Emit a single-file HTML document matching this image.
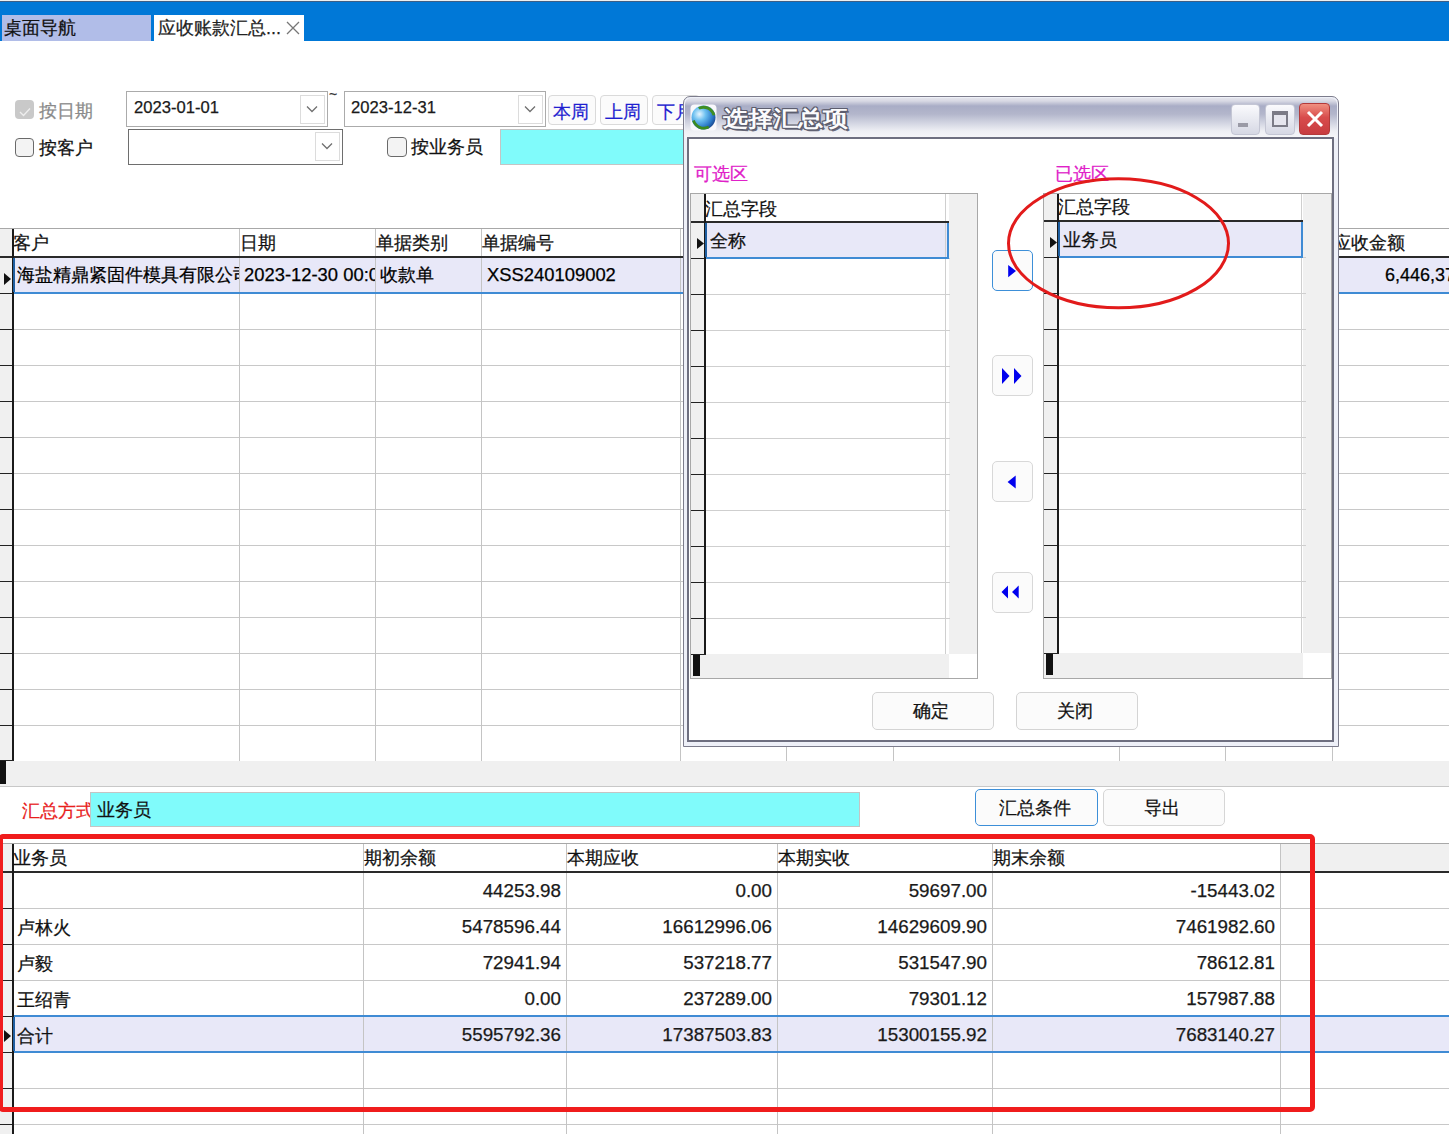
<!DOCTYPE html><html><head><meta charset="utf-8"><style>
html,body{margin:0;padding:0;}
body{width:1449px;height:1134px;overflow:hidden;position:relative;background:#fff;font-family:"Liberation Sans",sans-serif;color:#000;}
div{position:absolute;box-sizing:border-box;}
.t{white-space:nowrap;font-size:18px;line-height:20px;-webkit-text-stroke:0.25px;}
.cell{overflow:hidden;white-space:nowrap;font-size:18px;line-height:20px;-webkit-text-stroke:0.25px;}
</style></head><body>
<div style="left:0px;top:0px;width:1449px;height:1px;background:#eceef0"></div>
<div style="left:0px;top:1px;width:1449px;height:1px;background:#3d5f86"></div>
<div style="left:0px;top:2px;width:1449px;height:39px;background:#0078d7"></div>
<div style="left:2px;top:15px;width:149px;height:26px;background:#b1bde8"></div>
<div class="t" style="left:4px;top:18px;font-size:18px;line-height:20px;color:#111">桌面导航</div>
<div style="left:154px;top:15px;width:150px;height:27px;background:#fff"></div>
<div class="t" style="left:158px;top:18px;font-size:18px;line-height:20px;color:#222">应收账款汇总...</div>
<div style="left:286px;top:21px;width:14px;height:14px"><svg width="14" height="14" viewBox="0 0 14 14"><path d="M1 1 L13 13 M13 1 L1 13" stroke="#777" stroke-width="1.3"/></svg></div>
<div style="left:15px;top:100px;width:19px;height:19px;background:#c9c9c9;border-radius:4px"></div>
<div style="left:18px;top:104px;width:14px;height:12px"><svg width="14" height="12" viewBox="0 0 14 12"><path d="M2 6 L5.5 9.5 L12 2.5" fill="none" stroke="#eee" stroke-width="1.3"/></svg></div>
<div class="t" style="left:39px;top:101px;color:#8a8a8a">按日期</div>
<div style="left:126px;top:91px;width:202px;height:36px;border:1px solid #ababab;background:#fff"></div>
<div style="left:300px;top:95px;width:25px;height:29px;border:1px solid #dcdcdc;background:#fff"></div>
<div style="left:306px;top:105px;width:12px;height:8px"><svg width="12" height="8" viewBox="0 0 12 8" style="display:block"><path d="M1 1.5 L6 6.5 L11 1.5" fill="none" stroke="#707070" stroke-width="1.3"/></svg></div>
<div class="t" style="left:134px;top:98px;font-size:16.6px;line-height:20px;color:#1a1a1a">2023-01-01</div>
<div class="t" style="left:329px;top:86px;font-size:14px;line-height:16px;color:#333">~</div>
<div style="left:344px;top:91px;width:202px;height:36px;border:1px solid #ababab;background:#fff"></div>
<div style="left:518px;top:95px;width:25px;height:29px;border:1px solid #dcdcdc;background:#fff"></div>
<div style="left:524px;top:105px;width:12px;height:8px"><svg width="12" height="8" viewBox="0 0 12 8" style="display:block"><path d="M1 1.5 L6 6.5 L11 1.5" fill="none" stroke="#707070" stroke-width="1.3"/></svg></div>
<div class="t" style="left:351px;top:98px;font-size:16.6px;line-height:20px;color:#1a1a1a">2023-12-31</div>
<div style="left:548px;top:95px;width:48px;height:30px;border:1px solid #dadada;border-radius:4px;background:#fbfbfb"></div>
<div class="t" style="left:553px;top:102px;color:#1f1fd0">本周</div>
<div style="left:600px;top:95px;width:48px;height:30px;border:1px solid #dadada;border-radius:4px;background:#fbfbfb"></div>
<div class="t" style="left:605px;top:102px;color:#1f1fd0">上周</div>
<div style="left:652px;top:95px;width:48px;height:30px;border:1px solid #dadada;border-radius:4px;background:#fbfbfb"></div>
<div class="t" style="left:657px;top:102px;color:#1f1fd0">下月</div>
<div style="left:15px;top:138px;width:19px;height:19px;border:1px solid #6a6a6a;border-radius:4px;background:#f3f3f3"></div>
<div class="t" style="left:39px;top:138px;color:#111">按客户</div>
<div style="left:128px;top:129px;width:215px;height:36px;border:1px solid #6e6e6e;background:#fff"></div>
<div style="left:315px;top:132px;width:25px;height:29px;border:1px solid #dcdcdc;background:#fff"></div>
<div style="left:321px;top:142px;width:12px;height:8px"><svg width="12" height="8" viewBox="0 0 12 8" style="display:block"><path d="M1 1.5 L6 6.5 L11 1.5" fill="none" stroke="#707070" stroke-width="1.3"/></svg></div>
<div style="left:387px;top:137px;width:20px;height:20px;border:1px solid #6a6a6a;border-radius:4px;background:#f3f3f3"></div>
<div class="t" style="left:411px;top:137px;color:#111">按业务员</div>
<div style="left:500px;top:129px;width:200px;height:36px;border:1px solid #c4c4c4;background:#80fbfb"></div>
<div style="left:0px;top:228px;width:1449px;height:1px;background:#a8a8a8"></div>
<div style="left:0px;top:229px;width:12px;height:532px;background:#f0f0f0"></div>
<div style="left:13px;top:257px;width:1436px;height:36px;background:#e8e8f8"></div>
<div style="left:13px;top:293px;width:1449px;height:1px;background:#c8c8c8"></div>
<div style="left:0px;top:293px;width:13px;height:1px;background:#222"></div>
<div style="left:13px;top:329px;width:1449px;height:1px;background:#c8c8c8"></div>
<div style="left:0px;top:329px;width:13px;height:1px;background:#222"></div>
<div style="left:13px;top:365px;width:1449px;height:1px;background:#c8c8c8"></div>
<div style="left:0px;top:365px;width:13px;height:1px;background:#222"></div>
<div style="left:13px;top:401px;width:1449px;height:1px;background:#c8c8c8"></div>
<div style="left:0px;top:401px;width:13px;height:1px;background:#222"></div>
<div style="left:13px;top:437px;width:1449px;height:1px;background:#c8c8c8"></div>
<div style="left:0px;top:437px;width:13px;height:1px;background:#222"></div>
<div style="left:13px;top:473px;width:1449px;height:1px;background:#c8c8c8"></div>
<div style="left:0px;top:473px;width:13px;height:1px;background:#222"></div>
<div style="left:13px;top:509px;width:1449px;height:1px;background:#c8c8c8"></div>
<div style="left:0px;top:509px;width:13px;height:1px;background:#222"></div>
<div style="left:13px;top:545px;width:1449px;height:1px;background:#c8c8c8"></div>
<div style="left:0px;top:545px;width:13px;height:1px;background:#222"></div>
<div style="left:13px;top:581px;width:1449px;height:1px;background:#c8c8c8"></div>
<div style="left:0px;top:581px;width:13px;height:1px;background:#222"></div>
<div style="left:13px;top:617px;width:1449px;height:1px;background:#c8c8c8"></div>
<div style="left:0px;top:617px;width:13px;height:1px;background:#222"></div>
<div style="left:13px;top:653px;width:1449px;height:1px;background:#c8c8c8"></div>
<div style="left:0px;top:653px;width:13px;height:1px;background:#222"></div>
<div style="left:13px;top:689px;width:1449px;height:1px;background:#c8c8c8"></div>
<div style="left:0px;top:689px;width:13px;height:1px;background:#222"></div>
<div style="left:13px;top:725px;width:1449px;height:1px;background:#c8c8c8"></div>
<div style="left:0px;top:725px;width:13px;height:1px;background:#222"></div>
<div style="left:13px;top:761px;width:1449px;height:1px;background:#c8c8c8"></div>
<div style="left:0px;top:761px;width:13px;height:1px;background:#222"></div>
<div style="left:239px;top:229px;width:1px;height:532px;background:#c4c4c4"></div>
<div style="left:375px;top:229px;width:1px;height:532px;background:#c4c4c4"></div>
<div style="left:481px;top:229px;width:1px;height:532px;background:#c4c4c4"></div>
<div style="left:680px;top:229px;width:1px;height:532px;background:#c4c4c4"></div>
<div style="left:786px;top:229px;width:1px;height:532px;background:#c4c4c4"></div>
<div style="left:893px;top:229px;width:1px;height:532px;background:#c4c4c4"></div>
<div style="left:1119px;top:229px;width:1px;height:532px;background:#c4c4c4"></div>
<div style="left:1225px;top:229px;width:1px;height:532px;background:#c4c4c4"></div>
<div style="left:1332px;top:229px;width:1px;height:532px;background:#c4c4c4"></div>
<div style="left:0px;top:256px;width:1449px;height:2px;background:#2a2a2a"></div>
<div style="left:13px;top:292px;width:1449px;height:2px;background:#3f8bd4"></div>
<div style="left:12px;top:229px;width:2px;height:532px;background:#1a1a1a"></div>
<div style="left:13px;top:258px;width:2px;height:34px;background:#1f5fa0"></div>
<div style="left:4px;top:271px;width:8px;height:12px"><svg width="8" height="12" viewBox="0 0 8 12"><path d="M0 0 L7 6 L0 12 Z" fill="#111"/></svg></div>
<div class="t" style="left:13px;top:233px;color:#111">客户</div>
<div class="t" style="left:240px;top:233px;color:#111">日期</div>
<div class="t" style="left:376px;top:233px;color:#111">单据类别</div>
<div class="t" style="left:482px;top:233px;color:#111">单据编号</div>
<div class="t" style="left:1333px;top:233px;color:#111">应收金额</div>
<div class="cell" style="left:17px;top:265px;width:222px;height:22px">海盐精鼎紧固件模具有限公司</div>
<div class="cell" style="left:244px;top:265px;width:131px;height:22px;font-size:18.4px">2023-12-30 00:00</div>
<div class="cell" style="left:380px;top:265px;width:101px;height:22px">收款单</div>
<div class="cell" style="left:487px;top:265px;width:193px;height:22px;font-size:18.4px">XSS240109002</div>
<div class="cell" style="left:1338px;top:265px;width:111px;height:22px;"><span style="position:absolute;left:47px">6,446,377.00</span></div>
<div style="left:0px;top:761px;width:1449px;height:25px;background:#f0f0f0"></div>
<div style="left:0px;top:760px;width:14px;height:1px;background:#222"></div>
<div style="left:0px;top:761px;width:6px;height:23px;background:#111"></div>
<div style="left:0px;top:786px;width:1449px;height:1px;background:#c8c8c8"></div>
<div class="t" style="left:22px;top:801px;color:#e8201c">汇总方式</div>
<div style="left:90px;top:792px;width:770px;height:35px;border:1px solid #c4c4c4;background:#80fbfb"></div>
<div class="t" style="left:97px;top:800px;color:#111">业务员</div>
<div style="left:975px;top:789px;width:123px;height:37px;border:1.5px solid #3d8fd8;border-radius:5px;background:#fbfbfb"></div>
<div class="t" style="left:999px;top:798px;color:#111">汇总条件</div>
<div style="left:1103px;top:789px;width:122px;height:37px;border:1px solid #d6d6d6;border-radius:5px;background:#fbfbfb"></div>
<div class="t" style="left:1144px;top:798px;color:#111">导出</div>
<div style="left:0px;top:843px;width:1449px;height:1px;background:#a8a8a8"></div>
<div style="left:1281px;top:844px;width:168px;height:28px;background:#f0f0f0"></div>
<div style="left:0px;top:844px;width:12px;height:291px;background:#f0f0f0"></div>
<div style="left:13px;top:1016px;width:1436px;height:36px;background:#e8e8f8"></div>
<div style="left:13px;top:908px;width:1449px;height:1px;background:#c8c8c8"></div>
<div style="left:0px;top:908px;width:13px;height:1px;background:#222"></div>
<div style="left:13px;top:944px;width:1449px;height:1px;background:#c8c8c8"></div>
<div style="left:0px;top:944px;width:13px;height:1px;background:#222"></div>
<div style="left:13px;top:980px;width:1449px;height:1px;background:#c8c8c8"></div>
<div style="left:0px;top:980px;width:13px;height:1px;background:#222"></div>
<div style="left:13px;top:1016px;width:1449px;height:1px;background:#c8c8c8"></div>
<div style="left:0px;top:1016px;width:13px;height:1px;background:#222"></div>
<div style="left:13px;top:1052px;width:1449px;height:1px;background:#c8c8c8"></div>
<div style="left:0px;top:1052px;width:13px;height:1px;background:#222"></div>
<div style="left:13px;top:1088px;width:1449px;height:1px;background:#c8c8c8"></div>
<div style="left:0px;top:1088px;width:13px;height:1px;background:#222"></div>
<div style="left:13px;top:1124px;width:1449px;height:1px;background:#c8c8c8"></div>
<div style="left:0px;top:1124px;width:13px;height:1px;background:#222"></div>
<div style="left:13px;top:1160px;width:1449px;height:1px;background:#c8c8c8"></div>
<div style="left:0px;top:1160px;width:13px;height:1px;background:#222"></div>
<div style="left:363px;top:844px;width:1px;height:291px;background:#c4c4c4"></div>
<div style="left:566px;top:844px;width:1px;height:291px;background:#c4c4c4"></div>
<div style="left:777px;top:844px;width:1px;height:291px;background:#c4c4c4"></div>
<div style="left:992px;top:844px;width:1px;height:291px;background:#c4c4c4"></div>
<div style="left:1280px;top:844px;width:1px;height:291px;background:#c4c4c4"></div>
<div style="left:0px;top:871px;width:1449px;height:2px;background:#2a2a2a"></div>
<div style="left:13px;top:1015px;width:1449px;height:2px;background:#3f8bd4"></div>
<div style="left:13px;top:1051px;width:1449px;height:2px;background:#3f8bd4"></div>
<div style="left:12px;top:844px;width:2px;height:291px;background:#1a1a1a"></div>
<div style="left:13px;top:1017px;width:2px;height:34px;background:#1f5fa0"></div>
<div style="left:4px;top:1028px;width:8px;height:12px"><svg width="8" height="12" viewBox="0 0 8 12"><path d="M0 0 L7 6 L0 12 Z" fill="#111"/></svg></div>
<div class="t" style="left:13px;top:848px;color:#111">业务员</div>
<div class="t" style="left:364px;top:848px;color:#111">期初余额</div>
<div class="t" style="left:567px;top:848px;color:#111">本期应收</div>
<div class="t" style="left:778px;top:848px;color:#111">本期实收</div>
<div class="t" style="left:993px;top:848px;color:#111">期末余额</div>
<div class="t" style="left:17px;top:882px;color:#111"></div>
<div class="t" style="left:363px;top:880.5px;width:198px;text-align:right;font-size:18.8px;color:#1a1a1a">44253.98</div>
<div class="t" style="left:566px;top:880.5px;width:206px;text-align:right;font-size:18.8px;color:#1a1a1a">0.00</div>
<div class="t" style="left:777px;top:880.5px;width:210px;text-align:right;font-size:18.8px;color:#1a1a1a">59697.00</div>
<div class="t" style="left:992px;top:880.5px;width:283px;text-align:right;font-size:18.8px;color:#1a1a1a">-15443.02</div>
<div class="t" style="left:17px;top:918px;color:#111">卢林火</div>
<div class="t" style="left:363px;top:916.5px;width:198px;text-align:right;font-size:18.8px;color:#1a1a1a">5478596.44</div>
<div class="t" style="left:566px;top:916.5px;width:206px;text-align:right;font-size:18.8px;color:#1a1a1a">16612996.06</div>
<div class="t" style="left:777px;top:916.5px;width:210px;text-align:right;font-size:18.8px;color:#1a1a1a">14629609.90</div>
<div class="t" style="left:992px;top:916.5px;width:283px;text-align:right;font-size:18.8px;color:#1a1a1a">7461982.60</div>
<div class="t" style="left:17px;top:954px;color:#111">卢毅</div>
<div class="t" style="left:363px;top:952.5px;width:198px;text-align:right;font-size:18.8px;color:#1a1a1a">72941.94</div>
<div class="t" style="left:566px;top:952.5px;width:206px;text-align:right;font-size:18.8px;color:#1a1a1a">537218.77</div>
<div class="t" style="left:777px;top:952.5px;width:210px;text-align:right;font-size:18.8px;color:#1a1a1a">531547.90</div>
<div class="t" style="left:992px;top:952.5px;width:283px;text-align:right;font-size:18.8px;color:#1a1a1a">78612.81</div>
<div class="t" style="left:17px;top:990px;color:#111">王绍青</div>
<div class="t" style="left:363px;top:988.5px;width:198px;text-align:right;font-size:18.8px;color:#1a1a1a">0.00</div>
<div class="t" style="left:566px;top:988.5px;width:206px;text-align:right;font-size:18.8px;color:#1a1a1a">237289.00</div>
<div class="t" style="left:777px;top:988.5px;width:210px;text-align:right;font-size:18.8px;color:#1a1a1a">79301.12</div>
<div class="t" style="left:992px;top:988.5px;width:283px;text-align:right;font-size:18.8px;color:#1a1a1a">157987.88</div>
<div class="t" style="left:17px;top:1026px;color:#111">合计</div>
<div class="t" style="left:363px;top:1024.5px;width:198px;text-align:right;font-size:18.8px;color:#1a1a1a">5595792.36</div>
<div class="t" style="left:566px;top:1024.5px;width:206px;text-align:right;font-size:18.8px;color:#1a1a1a">17387503.83</div>
<div class="t" style="left:777px;top:1024.5px;width:210px;text-align:right;font-size:18.8px;color:#1a1a1a">15300155.92</div>
<div class="t" style="left:992px;top:1024.5px;width:283px;text-align:right;font-size:18.8px;color:#1a1a1a">7683140.27</div>
<div style="left:-2px;top:834px;width:1317px;height:278px;border:5px solid #f01c1c;border-radius:5px"></div>
<div style="left:683px;top:96px;width:656px;height:651px;border:1.6px solid #7c7c8c;border-radius:7px 7px 0 0;background:#eef0f8"></div>
<div style="left:685px;top:98px;width:652px;height:40px;border-radius:6px 6px 0 0;background:linear-gradient(#e4e4ec 0px,#d8d9e4 3px,#a9adc6 8px,#b3b6cb 16px,#d6d8e4 26px,#eeeff4 33px,#f6f6f9 40px)"></div>
<div style="left:687px;top:137px;width:647px;height:605px;border:2.5px solid #6e6f80;background:#fff"></div>
<div style="left:690px;top:104px;width:27px;height:27px"><svg width="27" height="27" viewBox="0 0 27 27" style="display:block">
<defs><radialGradient id="g1" cx="0.33" cy="0.36" r="0.75"><stop offset="0" stop-color="#e6f6ff"/><stop offset="0.35" stop-color="#6cc0f0"/><stop offset="0.75" stop-color="#2a78c8"/><stop offset="1" stop-color="#163f86"/></radialGradient></defs>
<rect x="0.5" y="0.5" width="26" height="26" rx="4" fill="#f8f8fb"/>
<circle cx="13.5" cy="13.5" r="12" fill="url(#g1)"/>
<path d="M8 3.2 A12 12 0 0 1 25.3 11 L22.5 11.5 A9.5 9.5 0 0 0 9.5 5.5 Z" fill="#3f8f22"/>
<path d="M2.2 17 A12 12 0 0 0 19.5 24 L18 21.8 A9.5 9.5 0 0 1 4.8 16 Z" fill="#3b8a20"/>
</svg></div>
<div class="t" style="left:723px;top:106.5px;font-size:24.5px;line-height:28px;font-weight:bold;transform:scaleY(0.88);transform-origin:0 0;-webkit-text-stroke:0;color:#fbfbfd;text-shadow:1px 0 0 #5c5d6e,-1px 0 0 #5c5d6e,0 1px 0 #5c5d6e,0 -1px 0 #5c5d6e,1px 1px 0 #5c5d6e,-1px -1px 0 #5c5d6e,1px -1px 0 #5c5d6e,-1px 1px 0 #5c5d6e,2px 2px 0 #6a6b7c">选择汇总项</div>
<div style="left:1231px;top:104px;width:29px;height:31px;border:1px solid #c4c6d4;border-radius:4px;background:linear-gradient(#fafafd,#d6d8e4)"></div>
<div style="left:1238px;top:123px;width:10px;height:4px;background:#9a9aa6"></div>
<div style="left:1265px;top:104px;width:30px;height:31px;border:1px solid #c4c6d4;border-radius:4px;background:linear-gradient(#fafafd,#d6d8e4)"></div>
<div style="left:1272px;top:111px;width:16px;height:16px;border:2px solid #7b7b86;border-top-width:4px;background:#e6e6ee"></div>
<div style="left:1299px;top:103px;width:31px;height:32px;border:1px solid #b33a3a;border-radius:4px;background:linear-gradient(#f08f80,#d84c4c 45%,#c83c40)"></div>
<div style="left:1305px;top:109px;width:20px;height:20px"><svg width="20" height="20" viewBox="0 0 20 20"><path d="M3 3 L17 17 M17 3 L3 17" stroke="#fff" stroke-width="3"/></svg></div>
<div class="t" style="left:694px;top:164px;color:#e020c8">可选区</div>
<div class="t" style="left:1055px;top:163.5px;color:#e020c8">已选区</div>
<div style="left:690px;top:193px;width:288px;height:486px;border:1px solid #a8a8a8;background:#fff"></div>
<div style="left:691px;top:194px;width:14px;height:460px;background:#f0f0f0"></div>
<div style="left:949px;top:194px;width:28px;height:460px;background:#f0f0f0"></div>
<div style="left:691px;top:654px;width:258px;height:24px;background:#f0f0f0"></div>
<div style="left:693px;top:654px;width:7px;height:22px;background:#111"></div>
<div style="left:706px;top:222px;width:243px;height:36px;background:#e8e8f8"></div>
<div style="left:705px;top:258px;width:245px;height:1px;background:#cfcfcf"></div>
<div style="left:691px;top:258px;width:15px;height:1px;background:#222"></div>
<div style="left:705px;top:294px;width:245px;height:1px;background:#cfcfcf"></div>
<div style="left:691px;top:294px;width:15px;height:1px;background:#222"></div>
<div style="left:705px;top:330px;width:245px;height:1px;background:#cfcfcf"></div>
<div style="left:691px;top:330px;width:15px;height:1px;background:#222"></div>
<div style="left:705px;top:366px;width:245px;height:1px;background:#cfcfcf"></div>
<div style="left:691px;top:366px;width:15px;height:1px;background:#222"></div>
<div style="left:705px;top:402px;width:245px;height:1px;background:#cfcfcf"></div>
<div style="left:691px;top:402px;width:15px;height:1px;background:#222"></div>
<div style="left:705px;top:438px;width:245px;height:1px;background:#cfcfcf"></div>
<div style="left:691px;top:438px;width:15px;height:1px;background:#222"></div>
<div style="left:705px;top:474px;width:245px;height:1px;background:#cfcfcf"></div>
<div style="left:691px;top:474px;width:15px;height:1px;background:#222"></div>
<div style="left:705px;top:510px;width:245px;height:1px;background:#cfcfcf"></div>
<div style="left:691px;top:510px;width:15px;height:1px;background:#222"></div>
<div style="left:705px;top:546px;width:245px;height:1px;background:#cfcfcf"></div>
<div style="left:691px;top:546px;width:15px;height:1px;background:#222"></div>
<div style="left:705px;top:582px;width:245px;height:1px;background:#cfcfcf"></div>
<div style="left:691px;top:582px;width:15px;height:1px;background:#222"></div>
<div style="left:705px;top:618px;width:245px;height:1px;background:#cfcfcf"></div>
<div style="left:691px;top:618px;width:15px;height:1px;background:#222"></div>
<div style="left:691px;top:654px;width:15px;height:1px;background:#222"></div>
<div style="left:945px;top:194px;width:1px;height:460px;background:#cfcfcf"></div>
<div style="left:691px;top:221px;width:258px;height:2px;background:#2a2a2a"></div>
<div style="left:705px;top:257px;width:244px;height:2px;background:#3f8bd4"></div>
<div style="left:947px;top:223px;width:2px;height:35px;background:#3f8bd4"></div>
<div style="left:704px;top:194px;width:2px;height:460px;background:#1a1a1a"></div>
<div style="left:705px;top:223px;width:2px;height:34px;background:#1f5fa0"></div>
<div style="left:697px;top:235px;width:7px;height:11px"><svg width="7" height="11" viewBox="0 0 7 11"><path d="M0 0 L7 5.5 L0 11 Z" fill="#111"/></svg></div>
<div class="t" style="left:705px;top:199px;color:#111">汇总字段</div>
<div class="t" style="left:710px;top:231px;color:#111">全称</div>
<div style="left:1043px;top:193px;width:289px;height:486px;border:1px solid #a8a8a8;background:#fff"></div>
<div style="left:1044px;top:194px;width:14px;height:459px;background:#f0f0f0"></div>
<div style="left:1303px;top:194px;width:28px;height:459px;background:#f0f0f0"></div>
<div style="left:1044px;top:653px;width:259px;height:25px;background:#f0f0f0"></div>
<div style="left:1046px;top:653px;width:7px;height:22px;background:#111"></div>
<div style="left:1059px;top:221px;width:244px;height:36px;background:#e8e8f8"></div>
<div style="left:1058px;top:257px;width:248px;height:1px;background:#cfcfcf"></div>
<div style="left:1044px;top:257px;width:15px;height:1px;background:#222"></div>
<div style="left:1058px;top:293px;width:248px;height:1px;background:#cfcfcf"></div>
<div style="left:1044px;top:293px;width:15px;height:1px;background:#222"></div>
<div style="left:1058px;top:329px;width:248px;height:1px;background:#cfcfcf"></div>
<div style="left:1044px;top:329px;width:15px;height:1px;background:#222"></div>
<div style="left:1058px;top:365px;width:248px;height:1px;background:#cfcfcf"></div>
<div style="left:1044px;top:365px;width:15px;height:1px;background:#222"></div>
<div style="left:1058px;top:401px;width:248px;height:1px;background:#cfcfcf"></div>
<div style="left:1044px;top:401px;width:15px;height:1px;background:#222"></div>
<div style="left:1058px;top:437px;width:248px;height:1px;background:#cfcfcf"></div>
<div style="left:1044px;top:437px;width:15px;height:1px;background:#222"></div>
<div style="left:1058px;top:473px;width:248px;height:1px;background:#cfcfcf"></div>
<div style="left:1044px;top:473px;width:15px;height:1px;background:#222"></div>
<div style="left:1058px;top:509px;width:248px;height:1px;background:#cfcfcf"></div>
<div style="left:1044px;top:509px;width:15px;height:1px;background:#222"></div>
<div style="left:1058px;top:545px;width:248px;height:1px;background:#cfcfcf"></div>
<div style="left:1044px;top:545px;width:15px;height:1px;background:#222"></div>
<div style="left:1058px;top:581px;width:248px;height:1px;background:#cfcfcf"></div>
<div style="left:1044px;top:581px;width:15px;height:1px;background:#222"></div>
<div style="left:1058px;top:617px;width:248px;height:1px;background:#cfcfcf"></div>
<div style="left:1044px;top:617px;width:15px;height:1px;background:#222"></div>
<div style="left:1044px;top:653px;width:15px;height:1px;background:#222"></div>
<div style="left:1301px;top:194px;width:1px;height:459px;background:#cfcfcf"></div>
<div style="left:1044px;top:220px;width:259px;height:2px;background:#2a2a2a"></div>
<div style="left:1058px;top:256px;width:245px;height:2px;background:#3f8bd4"></div>
<div style="left:1301px;top:222px;width:2px;height:35px;background:#3f8bd4"></div>
<div style="left:1057px;top:194px;width:2px;height:459px;background:#1a1a1a"></div>
<div style="left:1058px;top:222px;width:2px;height:34px;background:#1f5fa0"></div>
<div style="left:1050px;top:234px;width:7px;height:11px"><svg width="7" height="11" viewBox="0 0 7 11"><path d="M0 0 L7 5.5 L0 11 Z" fill="#111"/></svg></div>
<div class="t" style="left:1058px;top:197px;color:#111">汇总字段</div>
<div class="t" style="left:1063px;top:230px;color:#111">业务员</div>
<div style="left:992px;top:250px;width:41px;height:41px;border:1.5px solid #3d8fd8;border-radius:5px;background:#fbfbfb"></div>
<div style="left:992px;top:250px;width:41px;height:41px"><svg width="41" height="41" viewBox="0 0 41 41"><path d="M16.2 15 L24 21 L16.2 27.2 Z" fill="#0000ee"/></svg></div>
<div style="left:992px;top:355px;width:41px;height:41px;border:1px solid #d8d8d8;border-radius:5px;background:#fbfbfb"></div>
<div style="left:992px;top:355px;width:41px;height:41px"><svg width="41" height="41" viewBox="0 0 41 41"><path d="M10 13 L17.5 21 L10 29 Z M22 13 L29.5 21 L22 29 Z" fill="#0000ee"/></svg></div>
<div style="left:992px;top:461px;width:41px;height:41px;border:1px solid #d8d8d8;border-radius:5px;background:#fbfbfb"></div>
<div style="left:992px;top:461px;width:41px;height:41px"><svg width="41" height="41" viewBox="0 0 41 41"><path d="M15.6 21 L23.7 14.5 L23.7 27.5 Z" fill="#0000ee"/></svg></div>
<div style="left:992px;top:572px;width:41px;height:41px;border:1px solid #d8d8d8;border-radius:5px;background:#fbfbfb"></div>
<div style="left:992px;top:572px;width:41px;height:41px"><svg width="41" height="41" viewBox="0 0 41 41"><path d="M9.5 20 L16 13.5 L16 26.5 Z M20 20 L26.7 13.5 L26.7 26.5 Z" fill="#0000ee"/></svg></div>
<div style="left:872px;top:692px;width:122px;height:38px;border:1px solid #d4d4d4;border-radius:5px;background:#fbfbfb"></div>
<div class="t" style="left:913px;top:701px;color:#111">确定</div>
<div style="left:1016px;top:692px;width:122px;height:38px;border:1px solid #d4d4d4;border-radius:5px;background:#fbfbfb"></div>
<div class="t" style="left:1057px;top:701px;color:#111">关闭</div>
<div style="left:1000px;top:170px;width:240px;height:150px"><svg width="240" height="150" viewBox="0 0 240 150"><ellipse cx="118.5" cy="73.3" rx="110" ry="64.5" fill="none" stroke="#e21b1b" stroke-width="3"/></svg></div>
</body></html>
